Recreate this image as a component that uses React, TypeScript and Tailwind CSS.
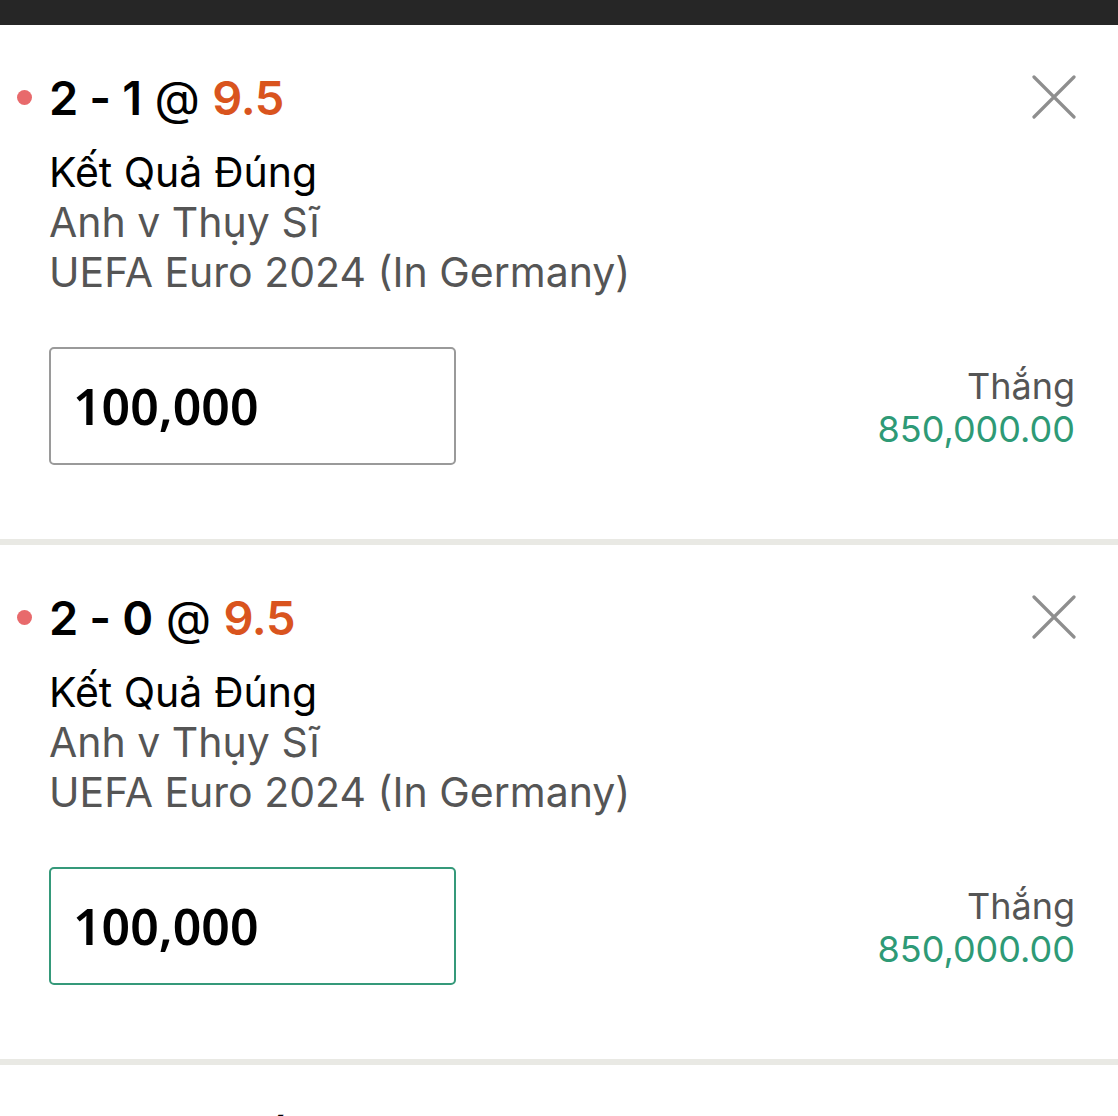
import React from 'react';

type Bet = {
  id: number;
  score: string;
  odds: string;
  market: string;
  match: string;
  league: string;
  stake: string;
  win: string;
  focused?: boolean;
};

const bets: Bet[] = [
  {
    id: 1,
    score: '2 - 1',
    odds: '9.5',
    market: 'Kết Quả Đúng',
    match: 'Anh v Thụy Sĩ',
    league: 'UEFA Euro 2024 (In Germany)',
    stake: '100,000',
    win: '850,000.00',
  },
  {
    id: 2,
    score: '2 - 0',
    odds: '9.5',
    market: 'Kết Quả Đúng',
    match: 'Anh v Thụy Sĩ',
    league: 'UEFA Euro 2024 (In Germany)',
    stake: '100,000',
    win: '850,000.00',
    focused: true,
  },
];

function CloseIcon() {
  return (
    <svg width="44" height="44" viewBox="0 0 44 44" fill="none" className="mt-[5px] -mr-[1px] shrink-0">
      <path d="M2 2 L42 42 M42 2 L2 42" stroke="#8e8e8e" strokeWidth="3.2" strokeLinecap="round" />
    </svg>
  );
}

function BetCard({ bet }: { bet: Bet }) {
  return (
    <div className="relative bg-white pl-[49px] pr-[43px] pt-[45px] pb-[74px]">
      {/* red dot */}
      <span className="absolute left-[17px] top-[65px] w-[15px] h-[15px] rounded-full bg-[#e86a6c]" />

      <div className="flex items-start justify-between">
        <div>
          <div className="text-[47px] leading-[56px] text-black tracking-[-0.4px]">
            <span className="font-semibold">{bet.score}</span>
            <span className="font-normal"> @ </span>
            <span className="font-semibold text-[#d9541e]">{bet.odds}</span>
          </div>
          <div className="mt-[21px] text-[41px] leading-[50px]">
            <div className="text-black">{bet.market}</div>
            <div className="text-[#555555]">{bet.match}</div>
            <div className="text-[#555555]">{bet.league}</div>
          </div>
        </div>
        <CloseIcon />
      </div>

      <div className="mt-[50px] flex items-center justify-between">
        <div
          className={
            bet.focused
              ? 'w-[407px] h-[118px] rounded-[5px] border-2 border-[#35997a] flex items-center px-[22px]'
              : 'w-[407px] h-[118px] rounded-[5px] border-2 border-[#9a9a9a] flex items-center px-[22px]'
          }
        >
          <span className="font-['Noto_Sans'] font-semibold text-[50px] leading-none text-black">
            {bet.stake}
          </span>
        </div>
        <div className="text-right text-[36px] leading-[43px] mt-[4px]">
          <div className="text-[#555555]">Thắng</div>
          <div className="text-[#2e9a76]">{bet.win}</div>
        </div>
      </div>
    </div>
  );
}

export default function App() {
  return (
    <div className="w-[1118px] h-[1116px] overflow-hidden bg-white font-['Inter','Noto_Sans',sans-serif]">
      <div className="h-[25px] bg-[#262626]" />
      {bets.map((bet) => (
        <React.Fragment key={bet.id}>
          <BetCard bet={bet} />
          <div className="h-[6px] bg-[#e9e9e4]" />
        </React.Fragment>
      ))}
      <div className="relative bg-white pl-[49px] pt-[48px]">
        <span className="absolute left-[17px] top-[68px] w-[15px] h-[15px] rounded-full bg-[#e86a6c]" />
        <div className="text-[47px] leading-[56px] text-black font-semibold tracking-[-0.4px]">Hiệp 1 - Kết Quả</div>
      </div>
    </div>
  );
}
